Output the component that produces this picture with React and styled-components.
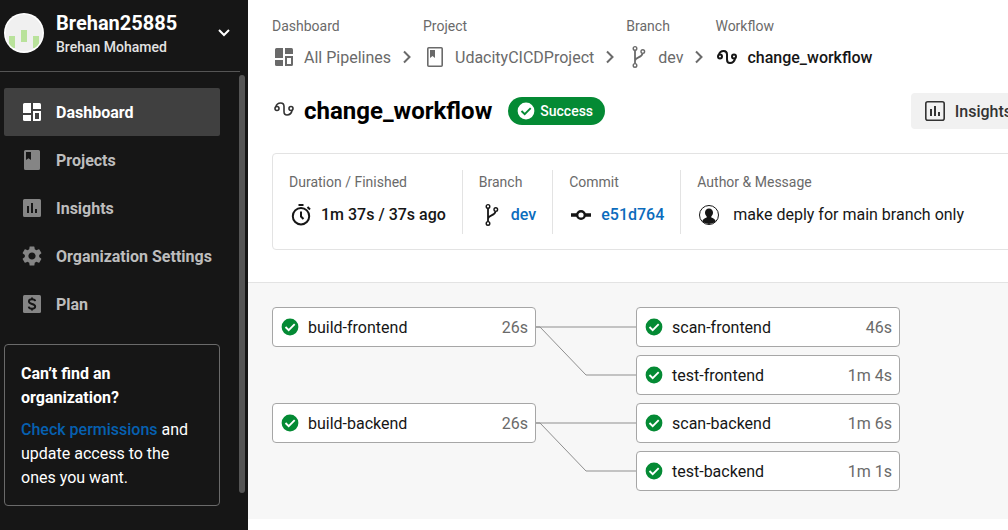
import React from "react";
import styled, { createGlobalStyle } from "styled-components";
import { MdSettings } from "react-icons/md";

const GlobalStyle = createGlobalStyle`
  *, *::before, *::after { box-sizing: border-box; }
  body {
    margin: 0;
    background: #fff;
    color: #161616;
    font-family: Roboto, "Liberation Sans", sans-serif;
    font-size: 16px;
    line-height: 25px;
  }
  h1, h2, p, ul, ol, dl, dd { margin: 0; padding: 0; }
  ul, ol { list-style: none; }
  a { color: inherit; text-decoration: none; }
  button { font: inherit; color: inherit; border: 0; cursor: pointer; }
  svg { display: block; flex: none; }
`;

const Page = styled.div`
  display: flex;
  min-height: 100vh;
  overflow: hidden;
`;

/* Sidebar */

const Sidebar = styled.aside`
  display: flex;
  flex-direction: column;
  flex: none;
  width: 248px;
  background: #161616;
  color: #fff;
`;

const AccountButton = styled.button`
  display: flex;
  align-items: center;
  gap: 12px;
  width: 240px;
  height: 72px;
  padding: 0 10px 5px 4px;
  background: none;
  border-bottom: 1px solid #555;
  text-align: left;
`;

const AccountText = styled.span`
  display: flex;
  flex-direction: column;
  flex: 1;
  padding-top: 4px;
  line-height: 24px;
`;

const AccountName = styled.span`
  font-size: 20px;
  font-weight: 700;
`;

const AccountOwner = styled.span`
  font-size: 14px;
  font-weight: 500;
  color: #e3e3e3;
`;

const SidebarBody = styled.div`
  display: flex;
  flex: 1;
  justify-content: space-between;
`;

const SidebarContent = styled.div`
  display: flex;
  flex-direction: column;
  gap: 16px;
  width: 220px;
  padding: 16px 0 16px 4px;
`;

const ScrollThumb = styled.div`
  width: 6px;
  margin: 3px 3px 37px;
  border-radius: 3px;
  background: #555;
`;

const NavLink = styled.a`
  display: flex;
  align-items: center;
  gap: 12px;
  height: 48px;
  padding: 0 16px;
  border-radius: 2px;
  font-weight: 700;
  white-space: nowrap;
  color: ${(p) => (p.$active ? "#fff" : "#bdbdbd")};
  background: ${(p) => (p.$active ? "#404040" : "transparent")};
  svg { color: ${(p) => (p.$active ? "#fff" : "#858585")}; }
`;

const HelpCard = styled.section`
  display: flex;
  flex-direction: column;
  gap: 8px;
  padding: 17px 16px 15px;
  border: 1px solid #6a6a6a;
  border-radius: 4px;
  line-height: 24px;
`;

const HelpTitle = styled.h2`
  font-size: 16px;
  font-weight: 700;
`;

const HelpLink = styled.a`
  color: #0660b0;
  font-weight: 500;
`;

/* Main column */

const Main = styled.main`
  flex: 1;
  min-width: 0;
  overflow: hidden;
`;

const Overview = styled.div`
  display: flex;
  flex-direction: column;
  gap: 17px;
  min-width: 800px;
  padding: 14px 24px 32px;
`;

const Crumbs = styled.ol`
  display: flex;
`;

const CrumbLabel = styled.span`
  display: block;
  font-size: 14px;
  line-height: 24px;
  color: #6a6a6a;
`;

const CrumbRow = styled.div`
  display: flex;
  align-items: center;
  height: 38px;
  color: ${(p) => (p.$current ? "#161616" : "#6a6a6a")};
  font-weight: ${(p) => (p.$current ? 500 : 400)};
`;

const CrumbLink = styled.a`
  display: flex;
  align-items: center;
  gap: 8px;
`;

const TitleBar = styled.header`
  display: flex;
  align-items: center;
  gap: 16px;
  margin-bottom: 7px;
`;

const Title = styled.h1`
  display: flex;
  align-items: center;
  gap: 8px;
  font-size: 24px;
  line-height: 35px;
  font-weight: 700;
  color: #000;
  svg { margin-bottom: 4px; color: #333; }
`;

const StatusBadge = styled.span`
  display: flex;
  align-items: center;
  gap: 4px;
  height: 28px;
  padding: 0 12px 0 8px;
  border-radius: 14px;
  background: #048a34;
  color: #fff;
  font-size: 14px;
  font-weight: 500;
`;

const InsightsButton = styled.button`
  display: flex;
  align-items: center;
  gap: 8px;
  height: 36px;
  margin-left: auto;
  padding: 0 12px;
  border-radius: 4px;
  background: #f1f1f1;
  color: #333;
  font-weight: 500;
`;

const Facts = styled.dl`
  display: flex;
  padding: 16px 16px 15px;
  border: 1px solid #e3e3e3;
  border-radius: 4px;
`;

const Fact = styled.div`
  display: flex;
  flex-direction: column;
  gap: 8px;
  padding: 0 16px 7px;
  border-left: 1px solid #e3e3e3;
  &:first-child { padding-left: 0; border-left: 0; }
`;

const FactLabel = styled.dt`
  font-size: 14px;
  line-height: 24px;
  color: #6a6a6a;
`;

const FactValue = styled.dd`
  display: flex;
  align-items: center;
  gap: ${(p) => (p.$wide ? 12 : 8)}px;
  font-weight: ${(p) => (p.$plain ? 400 : 500)};
`;

const FactLink = styled.a`
  color: #0b6cbd;
`;

/* Job graph */

const Graph = styled.section`
  display: flex;
  flex-direction: column;
  gap: 8px;
  padding: 24px 24px 28px;
  border-top: 1px solid #e3e3e3;
  background: #f7f7f7;
`;

const JobGroup = styled.div`
  display: flex;
  align-items: flex-start;
`;

const JobColumn = styled.ul`
  display: flex;
  flex-direction: column;
  gap: 8px;
`;

const JobLink = styled.a`
  display: flex;
  align-items: center;
  gap: 8px;
  width: 264px;
  height: 40px;
  padding: 0 7px;
  border: 1px solid #a6a6a6;
  border-radius: 4px;
  background: #fff;
`;

const JobTime = styled.span`
  margin-left: auto;
  color: #6a6a6a;
`;

/* Icons */

const Icon = ({ size = 24, children }) => (
  <svg width={size} height={size} viewBox="0 0 24 24" fill="none" aria-hidden="true">
    {children}
  </svg>
);

const DashboardIcon = () => (
  <Icon>
    <path fill="currentColor" d="M4.500 3H11V13H3V4.500A1.500 1.500 0 0 1 4.500 3Z" />
    <path fill="currentColor" d="M3 15H11V21H4.500A1.500 1.500 0 0 1 3 19.500Z" />
    <path fill="currentColor" d="M13 3H19.500A1.500 1.500 0 0 1 21 4.500V9H13Z" />
    <path fill="currentColor" fillRule="evenodd" d="M13 11H21V19.500A1.500 1.500 0 0 1 19.500 21H13ZM15 13V19H19V13Z" />
  </Icon>
);

const BookSolidIcon = () => (
  <Icon>
    <path fill="currentColor" fillRule="evenodd" d="M5.500 2H18.500A1.500 1.500 0 0 1 20 3.500V20.500A1.500 1.500 0 0 1 18.500 22H5.500A1.500 1.500 0 0 1 4 20.500V3.500A1.500 1.500 0 0 1 5.500 2ZM6 4V12L8.500 10.200L11 12V4Z" />
  </Icon>
);

const BookIcon = () => (
  <Icon>
    <rect x="4.800" y="2.800" width="14.400" height="18.400" rx="1" stroke="currentColor" strokeWidth="1.600" />
    <path fill="currentColor" d="M7 5H12V13L9.500 11L7 13Z" />
  </Icon>
);

const ChartSolidIcon = () => (
  <Icon>
    <path fill="currentColor" fillRule="evenodd" d="M4.500 3H19.500A1.500 1.500 0 0 1 21 4.500V19.500A1.500 1.500 0 0 1 19.500 21H4.500A1.500 1.500 0 0 1 3 19.500V4.500A1.500 1.500 0 0 1 4.500 3ZM7 10V17H9V10ZM11 7V17H13V7ZM15 13V17H17V13Z" />
  </Icon>
);

const ChartIcon = () => (
  <Icon>
    <rect x="2.800" y="2.800" width="18.400" height="18.400" rx="2" stroke="currentColor" strokeWidth="1.600" />
    <path fill="currentColor" d="M7 10H9V17H7ZM11 7H13V17H11ZM15 13H17V17H15Z" />
  </Icon>
);

const PlanIcon = () => (
  <Icon>
    <rect x="3" y="3" width="18" height="18" rx="1.500" fill="currentColor" />
    <path d="M15.200 9.200C15 7.900 13.800 7.300 12 7.300S8.900 8.200 8.900 9.600C8.900 12.700 15.200 11.300 15.200 14.500C15.200 15.900 13.900 16.700 12 16.700S8.900 16 8.700 14.600M12 5.500V7.500M12 16.500V18.500" stroke="#161616" strokeWidth="1.900" />
  </Icon>
);

const ChevronDownIcon = () => (
  <svg width="12" height="8" viewBox="0 0 12 8" fill="none" aria-hidden="true">
    <path d="M1 1L6 6L11 1" stroke="#fff" strokeWidth="2" />
  </svg>
);

const CrumbChevron = () => (
  <svg width="32" height="16" viewBox="0 0 32 16" fill="none" aria-hidden="true">
    <path d="M13 2.500L18.500 8L13 13.500" stroke="#6a6a6a" strokeWidth="2" />
  </svg>
);

const WorkflowIcon = ({ weight = 2 }) => (
  <Icon>
    <g stroke="currentColor" strokeWidth={weight}>
      <circle cx="5" cy="11.500" r="2" />
      <path d="M3.800 10C4.400 7.500 6.300 6 8.700 6C11 6 12 7.500 12 9.500V14.500C12 16.500 13 18 15 18C17.700 18 19.600 15.800 20.200 13" />
      <circle cx="19" cy="11.500" r="2" />
    </g>
  </Icon>
);

const BranchIcon = () => (
  <Icon>
    <g stroke="currentColor" strokeWidth="1.400">
      <circle cx="9" cy="3.400" r="1.800" />
      <circle cx="9" cy="20.400" r="1.800" />
      <circle cx="16.800" cy="6.600" r="1.800" />
      <path d="M9 5.300V18.500M16.500 8.500C16.300 12.500 9.500 12.200 9 15.500" strokeWidth="1.800" />
    </g>
  </Icon>
);

const StopwatchIcon = () => (
  <Icon>
    <circle cx="12" cy="13.200" r="8.200" stroke="currentColor" strokeWidth="2" />
    <path d="M9.500 2H14.500M12 8.500V13.500L14.500 16M18.500 4L21 6.500" stroke="currentColor" strokeWidth="2" />
  </Icon>
);

const CommitIcon = () => (
  <Icon>
    <circle cx="12" cy="12" r="3.800" stroke="currentColor" strokeWidth="2.400" />
    <path d="M2 12H8M16 12H22" stroke="currentColor" strokeWidth="3.600" />
  </Icon>
);

const PersonIcon = () => (
  <Icon>
    <circle cx="12" cy="12" r="9.500" stroke="currentColor" />
    <path fill="currentColor" d="M12 5.500C14.400 5.500 16 7.200 16 9.500C16 11.300 15.300 12.300 14.300 13.500V14.500C16 15.200 18 16 18.800 18.200A9.500 9.500 0 0 1 5.200 18.200C6 16 8 15.200 9.700 14.500V13.500C8.700 12.300 8 11.300 8 9.500C8 7.200 9.600 5.500 12 5.500Z" />
  </Icon>
);

const CheckIcon = ({ disc = "#048a34", mark = "#fff" }) => (
  <svg width="20" height="20" viewBox="0 0 20 20" fill="none" aria-hidden="true">
    <circle cx="10" cy="10" r="8.400" fill={disc} />
    <path d="M5.500 10L8.700 13.200L14.700 7.200" stroke={mark} strokeWidth="1.900" />
  </svg>
);

const Avatar = () => (
  <svg width="40" height="40" viewBox="0 0 40 40" aria-hidden="true">
    <defs>
      <clipPath id="avatar-disc"><circle cx="20" cy="20" r="18.500" /></clipPath>
    </defs>
    <circle cx="20" cy="20" r="20" fill="#fff" />
    <g clipPath="url(#avatar-disc)">
      <path fill="#f0f0f0" d="M0 0H40V40H0Z" />
      <path fill="#b9e29b" d="M5 23H11V35H5ZM17 17H23V29H17ZM29 23H35V35H29Z" />
    </g>
  </svg>
);

const Connector = () => (
  <svg width="100" height="88" viewBox="0 0 100 88" fill="none" aria-hidden="true">
    <path d="M0 20H100" stroke="#8f8f8f" />
    <path d="M0 20H4L50 68H100" stroke="#8f8f8f" />
  </svg>
);

/* Content */

const navItems = [
  { label: "Dashboard", icon: <DashboardIcon />, active: true },
  { label: "Projects", icon: <BookSolidIcon /> },
  { label: "Insights", icon: <ChartSolidIcon /> },
  { label: "Organization Settings", icon: <MdSettings size={24} aria-hidden="true" /> },
  { label: "Plan", icon: <PlanIcon /> },
];

const crumbs = [
  { label: "Dashboard", text: "All Pipelines", icon: <DashboardIcon /> },
  { label: "Project", text: "UdacityCICDProject", icon: <BookIcon /> },
  { label: "Branch", text: "dev", icon: <BranchIcon /> },
  { label: "Workflow", text: "change_workflow", icon: <WorkflowIcon />, current: true },
];

const jobGroups = [
  {
    first: { name: "build-frontend", time: "26s" },
    next: [{ name: "scan-frontend", time: "46s" }, { name: "test-frontend", time: "1m 4s" }],
  },
  {
    first: { name: "build-backend", time: "26s" },
    next: [{ name: "scan-backend", time: "1m 6s" }, { name: "test-backend", time: "1m 1s" }],
  },
];

const Job = ({ name, time }) => (
  <JobLink href="#">
    <CheckIcon />
    <span>{name}</span>
    <JobTime>{time}</JobTime>
  </JobLink>
);

export default function App() {
  return (
    <Page>
      <GlobalStyle />
      <Sidebar>
        <AccountButton type="button">
          <Avatar />
          <AccountText>
            <AccountName>Brehan25885</AccountName>
            <AccountOwner>Brehan Mohamed</AccountOwner>
          </AccountText>
          <ChevronDownIcon />
        </AccountButton>
        <SidebarBody>
          <SidebarContent>
            <nav>
              {navItems.map((item) => (
                <NavLink key={item.label} href="#" $active={item.active}>
                  {item.icon}
                  {item.label}
                </NavLink>
              ))}
            </nav>
            <HelpCard>
              <HelpTitle>Can’t find an organization?</HelpTitle>
              <p>
                <HelpLink href="#">Check permissions</HelpLink> and update access to the ones you want.
              </p>
            </HelpCard>
          </SidebarContent>
          <ScrollThumb />
        </SidebarBody>
      </Sidebar>

      <Main>
        <Overview>
          <nav aria-label="Breadcrumb">
            <Crumbs>
              {crumbs.map((crumb) => (
                <li key={crumb.label}>
                  <CrumbLabel>{crumb.label}</CrumbLabel>
                  <CrumbRow $current={crumb.current}>
                    <CrumbLink href="#">
                      {crumb.icon}
                      {crumb.text}
                    </CrumbLink>
                    {!crumb.current && <CrumbChevron />}
                  </CrumbRow>
                </li>
              ))}
            </Crumbs>
          </nav>

          <TitleBar>
            <Title>
              <WorkflowIcon weight={1.6} />
              change_workflow
            </Title>
            <StatusBadge>
              <CheckIcon disc="#fff" mark="#048a34" />
              Success
            </StatusBadge>
            <InsightsButton type="button">
              <ChartIcon />
              Insights
            </InsightsButton>
          </TitleBar>

          <Facts>
            <Fact>
              <FactLabel>Duration / Finished</FactLabel>
              <FactValue><StopwatchIcon />1m 37s / 37s ago</FactValue>
            </Fact>
            <Fact>
              <FactLabel>Branch</FactLabel>
              <FactValue><BranchIcon /><FactLink href="#">dev</FactLink></FactValue>
            </Fact>
            <Fact>
              <FactLabel>Commit</FactLabel>
              <FactValue><CommitIcon /><FactLink href="#">e51d764</FactLink></FactValue>
            </Fact>
            <Fact>
              <FactLabel>Author &amp; Message</FactLabel>
              <FactValue $plain $wide><PersonIcon />make deply for main branch only</FactValue>
            </Fact>
          </Facts>
        </Overview>

        <Graph>
          {jobGroups.map((group) => (
            <JobGroup key={group.first.name}>
              <Job {...group.first} />
              <Connector />
              <JobColumn>
                {group.next.map((job) => (
                  <li key={job.name}><Job {...job} /></li>
                ))}
              </JobColumn>
            </JobGroup>
          ))}
        </Graph>
      </Main>
    </Page>
  );
}
